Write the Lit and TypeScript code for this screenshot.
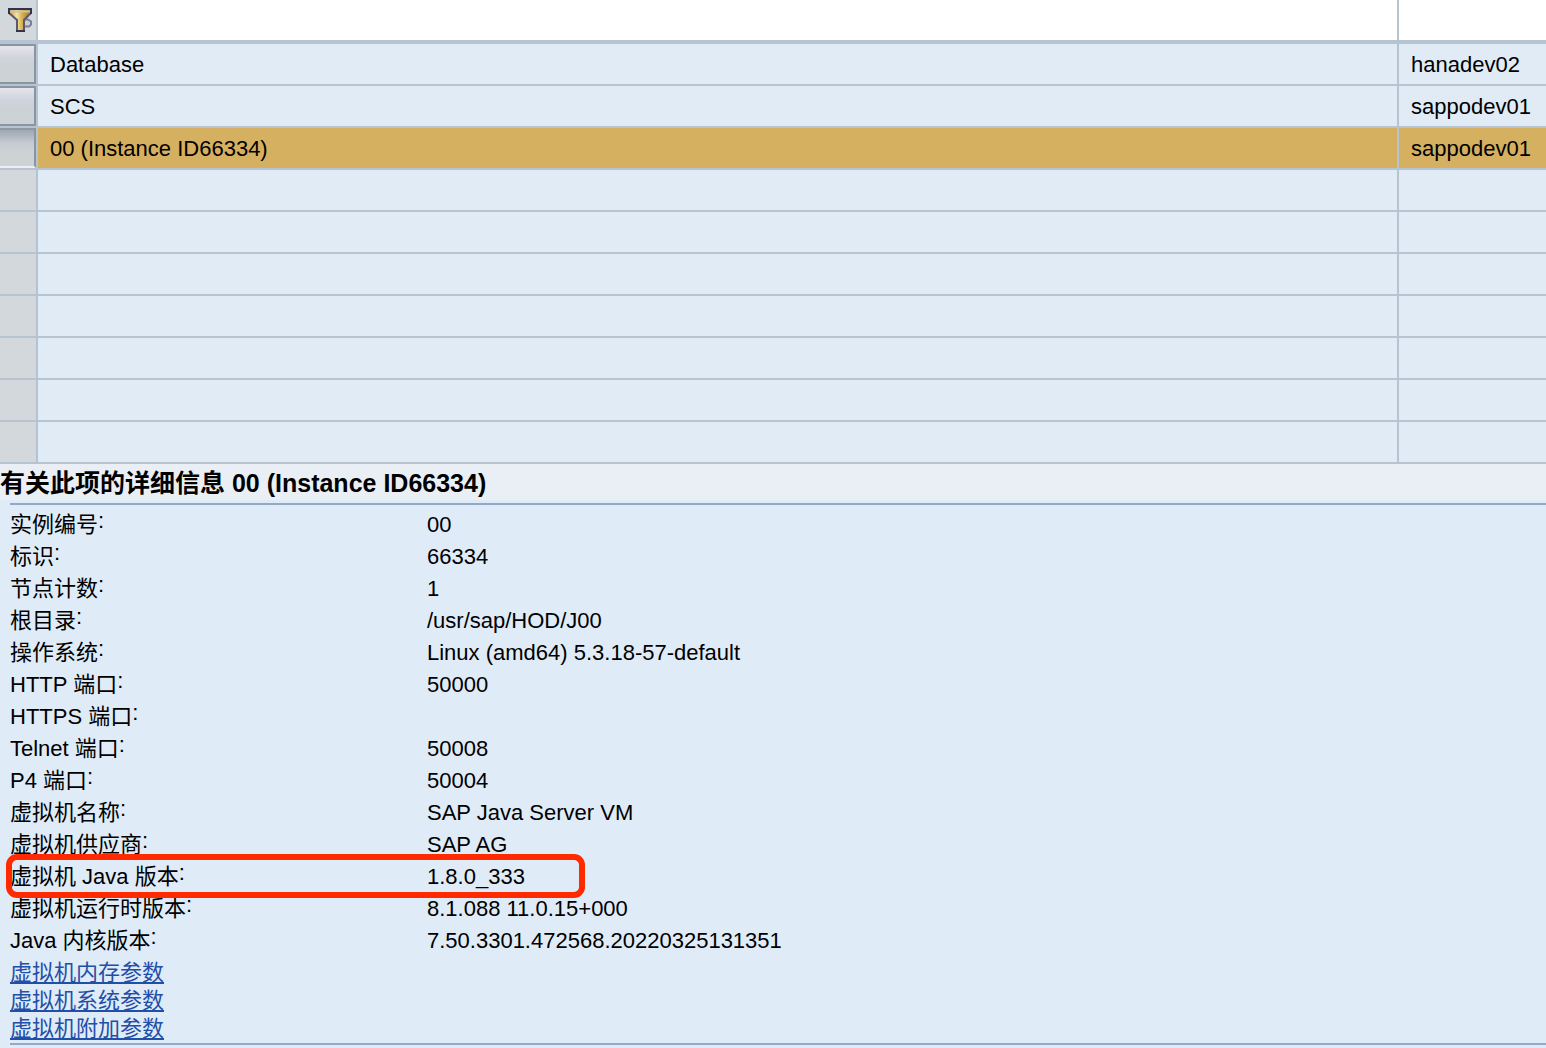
import { LitElement, html, css, nothing } from "lit";
import { customElement, state } from "lit/decorators.js";
import { classMap } from "lit/directives/class-map.js";

interface Instance {
  name: string;
  host: string;
}

interface Detail {
  label: string;
  value: string;
  marked?: boolean;
}

const INSTANCES: Instance[] = [
  { name: "Database", host: "hanadev02" },
  { name: "SCS", host: "sappodev01" },
  { name: "00 (Instance ID66334)", host: "sappodev01" },
];

const EMPTY_ROWS = 7;

const DETAILS: Detail[] = [
  { label: "实例编号", value: "00" },
  { label: "标识", value: "66334" },
  { label: "节点计数", value: "1" },
  { label: "根目录", value: "/usr/sap/HOD/J00" },
  { label: "操作系统", value: "Linux (amd64) 5.3.18-57-default" },
  { label: "HTTP 端口", value: "50000" },
  { label: "HTTPS 端口", value: "" },
  { label: "Telnet 端口", value: "50008" },
  { label: "P4 端口", value: "50004" },
  { label: "虚拟机名称", value: "SAP Java Server VM" },
  { label: "虚拟机供应商", value: "SAP AG" },
  { label: "虚拟机 Java 版本", value: "1.8.0_333", marked: true },
  { label: "虚拟机运行时版本", value: "8.1.088 11.0.15+000" },
  { label: "Java 内核版本", value: "7.50.3301.472568.20220325131351" },
];

const LINKS = ["虚拟机内存参数", "虚拟机系统参数", "虚拟机附加参数"];

@customElement("instance-table")
class InstanceTable extends LitElement {
  static styles = css`
    :host {
      display: block;
    }
    .grid {
      width: 100%;
      table-layout: fixed;
      border-collapse: separate;
      border-spacing: 0;
    }
    .col-select {
      width: 38px;
    }
    .col-host {
      width: 147px;
    }
    .cell {
      box-sizing: border-box;
      height: 42px;
      padding: 2px 12px 0;
      border-right: 2px solid #b6c3d0;
      border-bottom: 2px solid #b6c3d0;
      background: #e0ebf5;
      text-align: left;
      font-weight: normal;
      line-height: 38px;
      white-space: nowrap;
    }
    .cell:last-child {
      border-right: 0;
    }
    .filter .cell {
      height: 44px;
      padding: 0;
      border-bottom-width: 4px;
      background: #ffffff;
    }
    .cell.select,
    .filter .cell.select {
      padding: 0;
      background: #d3d8dc;
    }
    .selected .cell {
      background: #d6b061;
    }
    .button {
      display: block;
      box-sizing: border-box;
      width: 100%;
      height: 40px;
      margin: 0;
      padding: 0;
      border: 2px solid #8a94a3;
      border-left: 0;
      border-radius: 0;
      background: linear-gradient(#e6e5ec, #d2d4de 30%, #cbd1d4 60%, #cdd2d5);
    }
    .selected .button {
      border-top-color: #8f98a5;
      border-bottom-color: #eceff1;
      background: linear-gradient(#a0a7b2, #c4cad0 35%, #cdd2d5 60%);
    }
    .filter .button {
      border: 0;
      padding-left: 8px;
      background: none;
    }
    .icon {
      display: block;
      width: 24px;
      height: 24px;
    }
    .input {
      display: block;
      box-sizing: border-box;
      width: 100%;
      height: 40px;
      padding: 0 12px;
      border: 0;
      background: transparent;
      font: inherit;
    }
  `;

  @state() private selected = 2;

  private renderRow(item: Instance, index: number) {
    return html`
      <tr class=${classMap({ row: true, selected: index === this.selected })}>
        <td class="cell select">
          <button
            class="button"
            aria-label=${item.name}
            aria-pressed=${index === this.selected}
            @click=${() => (this.selected = index)}
          ></button>
        </td>
        <td class="cell">${item.name}</td>
        <td class="cell">${item.host}</td>
      </tr>
    `;
  }

  render() {
    return html`
      <table class="grid">
        <colgroup>
          <col class="col-select" />
          <col />
          <col class="col-host" />
        </colgroup>
        <thead>
          <tr class="filter">
            <td class="cell select">
              <button class="button" aria-label="过滤">
                <svg class="icon" viewBox="0 0 24 24" aria-hidden="true">
                  <defs>
                    <linearGradient id="gold" x1="0" x2="1" y1="0" y2="0">
                      <stop offset="0" stop-color="#c09a3c" />
                      <stop offset="0.35" stop-color="#f3e4ac" />
                      <stop offset="0.6" stop-color="#d6b04c" />
                      <stop offset="1" stop-color="#9a7426" />
                    </linearGradient>
                  </defs>
                  <path d="M14 11.500h6l3 2v3l-2 2h-7" fill="#c9cdd8" stroke="#7c7f94" stroke-width="2" />
                  <path d="M1 1h22v4l-7 7v11h-7v-11l-8-7z" fill="url(#gold)" />
                  <path d="M2 2.500h20v2H2z" fill="#cfc298" />
                  <path d="M1 5l8 7v11M23 5l-7 7v11" fill="none" stroke="#5e586c" stroke-width="2" />
                  <path d="M1 6V1h22v5M8 23h9" fill="none" stroke="#33334f" stroke-width="2" />
                </svg>
              </button>
            </td>
            <td class="cell"><input class="input" type="text" aria-label="名称" /></td>
            <td class="cell"><input class="input" type="text" aria-label="主机" /></td>
          </tr>
        </thead>
        <tbody>
          ${INSTANCES.map((item, index) => this.renderRow(item, index))}
          ${Array.from(
            { length: EMPTY_ROWS },
            () => html`
              <tr class="row">
                <td class="cell select"></td>
                <td class="cell"></td>
                <td class="cell"></td>
              </tr>
            `,
          )}
        </tbody>
      </table>
    `;
  }
}

@customElement("instance-details")
class InstanceDetails extends LitElement {
  static styles = css`
    :host {
      display: block;
    }
    .title {
      margin: 0;
      background: #e9eff5;
      font-size: 25px;
      font-weight: bold;
      line-height: 34px;
      padding-top: 2px;
      white-space: nowrap;
    }
    .panel {
      margin: 3px 0 0 10px;
      border-top: 2px solid #93a9c6;
      border-bottom: 2px solid #93a9c6;
      padding-top: 4px;
    }
    .list {
      margin: 0;
    }
    .item {
      display: grid;
      grid-template-columns: 417px 1fr;
      position: relative;
      height: 32px;
      line-height: 32px;
      white-space: nowrap;
    }
    .label,
    .value {
      margin: 0;
    }
    .colon {
      line-height: 0;
      vertical-align: 4px;
    }
    .mark {
      position: absolute;
      box-sizing: border-box;
      top: -7px;
      bottom: -5px;
      left: -4px;
      width: 579px;
      border: 6px solid #ff2a00;
      border-radius: 11px;
      pointer-events: none;
      z-index: 1;
    }
    .links {
      display: flex;
      flex-direction: column;
      align-items: flex-start;
      padding-top: 2px;
    }
    .link {
      color: #1f4fa8;
      line-height: 28px;
      text-decoration: underline;
      text-decoration-thickness: 2px;
      text-underline-offset: 2px;
      text-decoration-skip-ink: none;
    }
  `;

  render() {
    return html`
      <h2 class="title">有关此项的详细信息 00 (Instance ID66334)</h2>
      <div class="panel">
        <dl class="list">
          ${DETAILS.map(
            (detail) => html`
              <div class="item">
                <dt class="label">${detail.label}<span class="colon">:</span></dt>
                <dd class="value">
                  ${detail.value}${detail.marked ? html`<span class="mark"></span>` : nothing}
                </dd>
              </div>
            `,
          )}
        </dl>
        <nav class="links">
          ${LINKS.map((text) => html`<a class="link" href="#">${text}</a>`)}
        </nav>
      </div>
    `;
  }
}

@customElement("app-root")
class AppRoot extends LitElement {
  static styles = css`
    :host {
      display: block;
      min-height: 100vh;
      overflow-x: hidden;
      background: #dfebf7;
      color: #000000;
      font-family: "Liberation Sans", Arial, "Noto Sans CJK SC", sans-serif;
      font-size: 22px;
    }
  `;

  render() {
    return html`
      <instance-table></instance-table>
      <instance-details></instance-details>
    `;
  }
}
